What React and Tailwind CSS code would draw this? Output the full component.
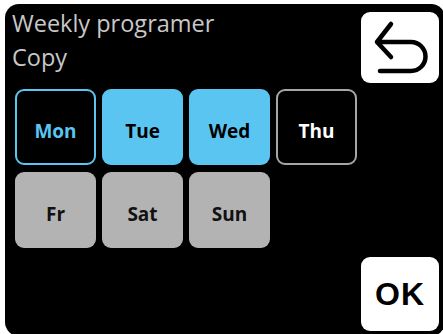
import React from 'react';

const days = [
    { label: 'Mon', box: 'border-2 border-[#5bc5f2] bg-black text-[#5bc5f2]' },
    { label: 'Tue', box: 'bg-[#5bc5f2] text-black' },
    { label: 'Wed', box: 'bg-[#5bc5f2] text-black' },
    { label: 'Thu', box: 'border-2 border-[#a6a6a6] bg-black text-white' },
    { label: 'Fr', box: 'bg-[#b3b3b3] text-[#111]' },
    { label: 'Sat', box: 'bg-[#b3b3b3] text-[#111]' },
    { label: 'Sun', box: 'bg-[#b3b3b3] text-[#111]' },
];

const BackIcon = () => (
    <svg width="78" height="71" viewBox="0 0 78 71" fill="none">
        <path
            d="M30 12 L16 30 L30 45 M16 30 H50 A14.5 14.5 0 0 1 50 59 H19"
            stroke="black"
            strokeWidth="4.5"
            strokeLinecap="round"
            strokeLinejoin="round"
        />
    </svg>
);

export default function App() {
    return (
        <div className="w-[443px] h-[334px] bg-white overflow-hidden">
            <div className="ml-[5px] mt-[4px] w-[440px] h-[332px] bg-black rounded-[14px] flex flex-col pl-[10px] pr-[6px] pt-[8px] pb-[5px]">
                {/* 상단: 제목 + 뒤로가기 */}
                <div className="flex justify-between items-start">
                    <div
                        className="-mt-[6px] -ml-[3px] text-[23.5px] leading-[34px] text-[#c8c8c8]"
                        style={{ fontFamily: '"Open Sans", sans-serif' }}
                    >
                        <div>Weekly programer</div>
                        <div>Copy</div>
                    </div>
                    <button className="w-[78px] h-[71px] bg-white rounded-[9px] flex items-center justify-center">
                        <BackIcon />
                    </button>
                </div>

                {/* 요일 선택 */}
                <div
                    className="mt-[6px] grid grid-cols-[repeat(4,81px)] auto-rows-[76px] gap-x-[6px] gap-y-[7px]"
                    style={{ fontFamily: '"Open Sans", sans-serif' }}
                >
                    {days.map(d => (
                        <div
                            key={d.label}
                            className={`rounded-[9px] flex items-center justify-center pt-[8px] text-[19px] font-bold ${d.box}`}
                        >
                            {d.label}
                        </div>
                    ))}
                </div>

                <button
                    className="mt-auto self-end w-[78px] h-[74px] bg-white rounded-[9px] flex items-center justify-center text-[32px] font-bold tracking-[1px] text-black"
                    style={{ fontFamily: '"Liberation Sans", Arial, sans-serif' }}
                >
                    OK
                </button>
            </div>
        </div>
    );
}
